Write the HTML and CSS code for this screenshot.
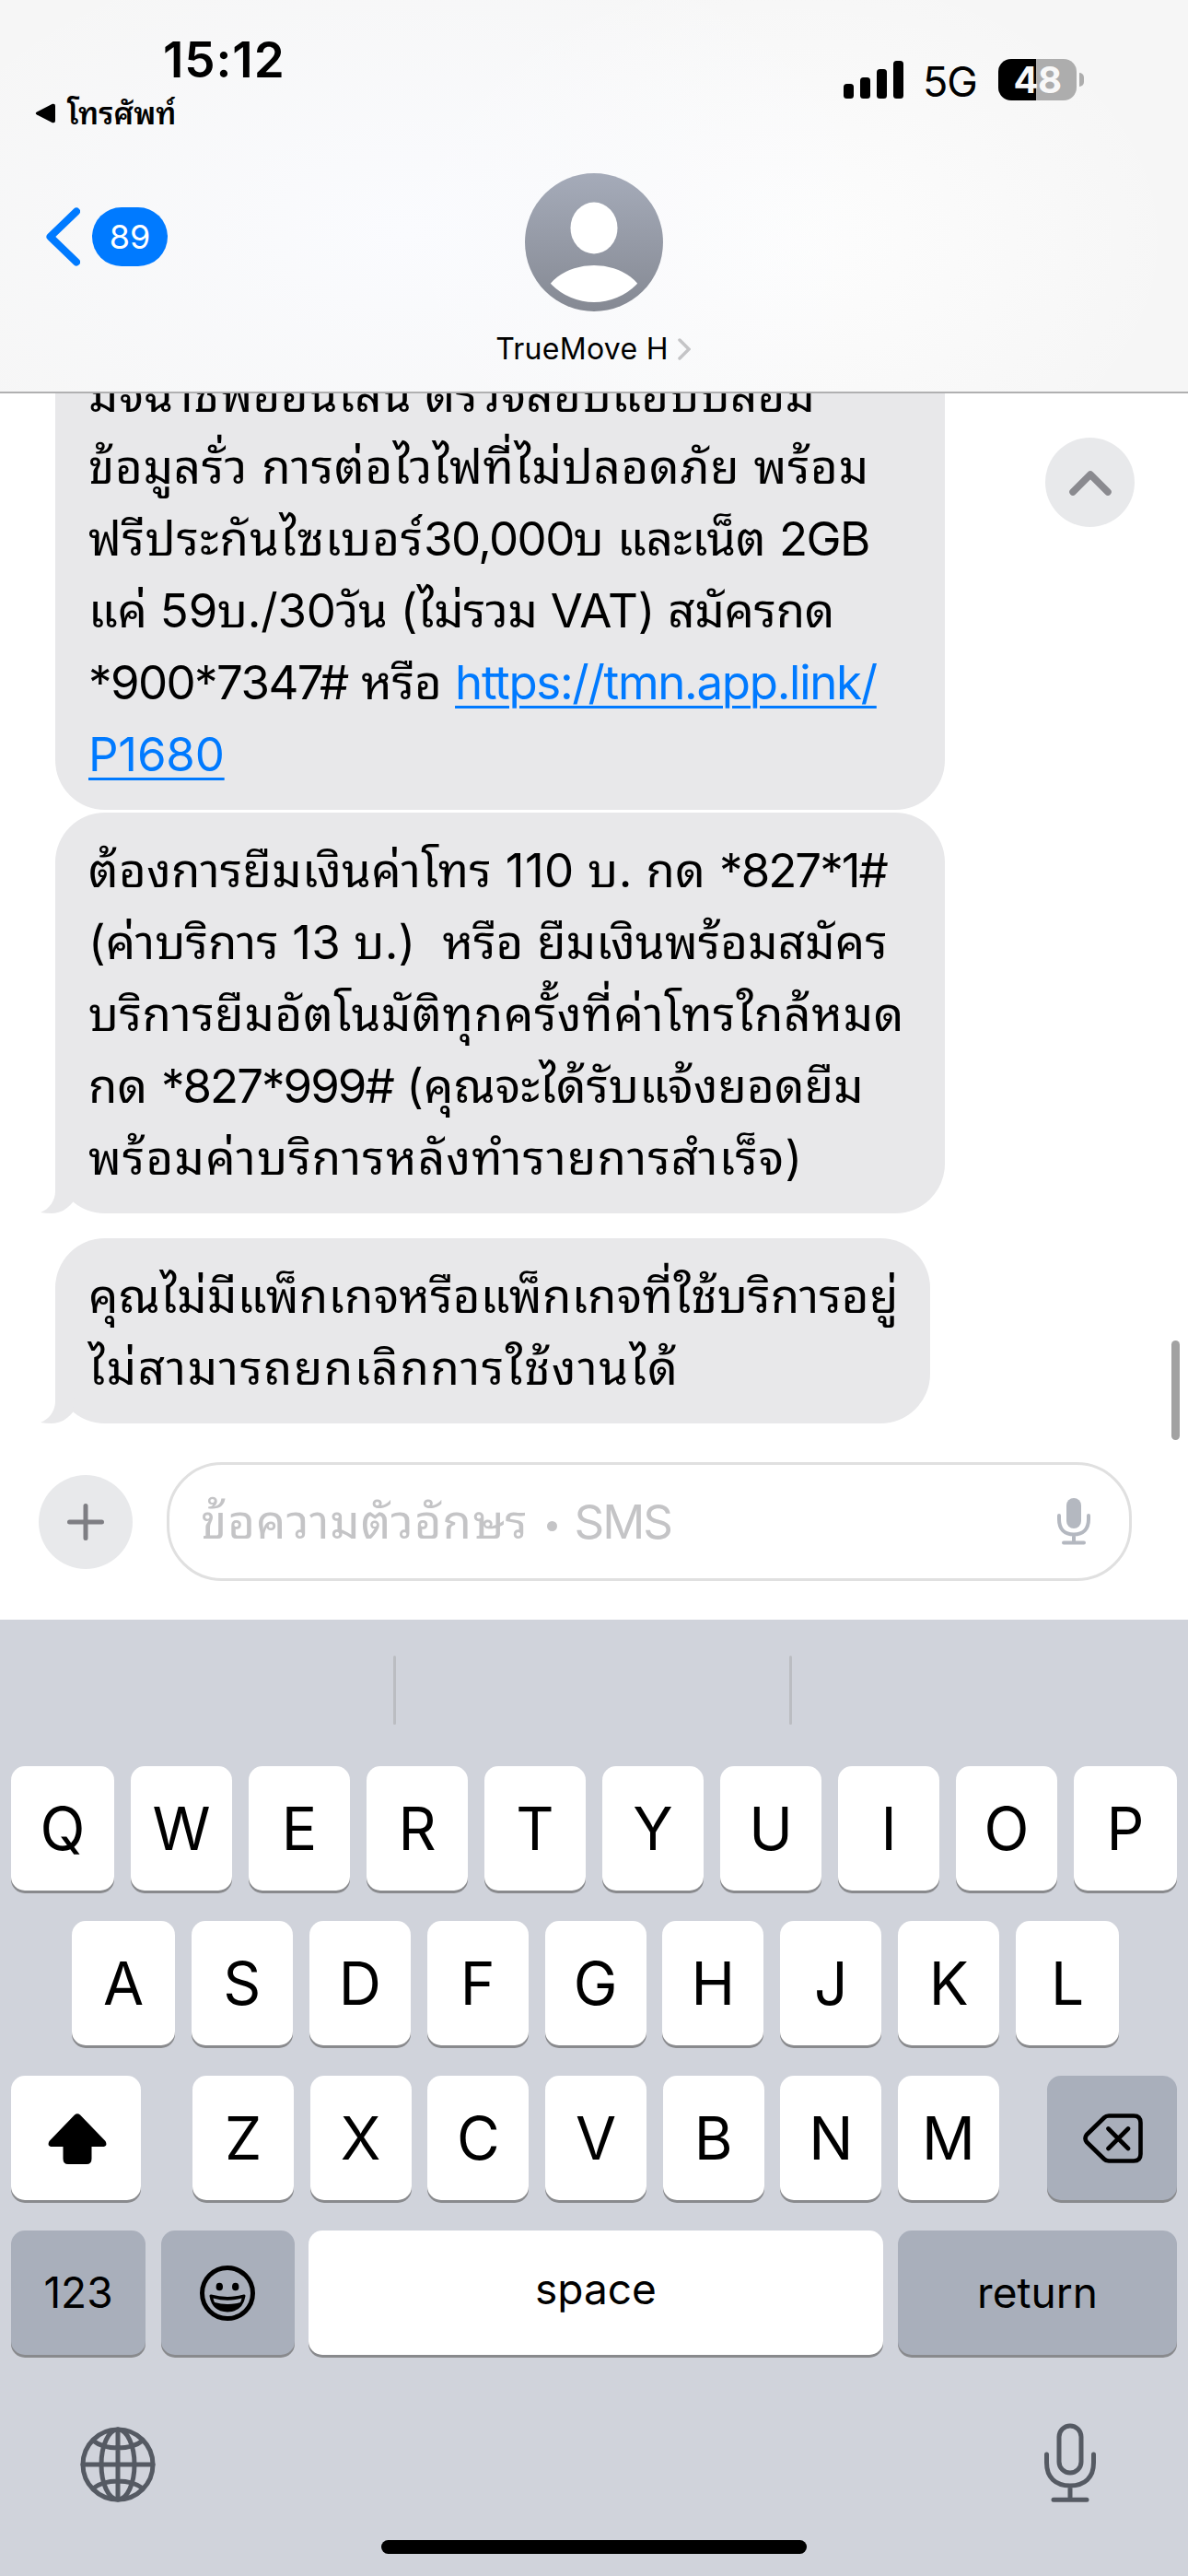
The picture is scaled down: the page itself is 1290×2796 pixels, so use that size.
FILE: index.html
```html
<!DOCTYPE html>
<html lang="th">
<head>
    <meta charset="UTF-8">
    <meta name="viewport" content="width=device-width, initial-scale=1.0">
    <title>TrueMove H</title>
    <link rel="stylesheet" href="styles.css">
</head>
<body>
    <div class="screen">
        <header class="header">
            <div class="status-bar">
                <div class="status-left">
                    <div class="time">15:12</div>
                    <div class="back-app">
                        <svg width="22" height="22" viewBox="0 0 22 22"><path d="M2 9.5 19 .8Q22 0 22 3V19Q22 22 19 21.200L2 12.500Q-.5 11 2 9.500Z"/></svg>
                        <span class="back-app-name">โทรศัพท์</span>
                    </div>
                </div>
                <div class="status-right">
                    <svg width="65" height="41" viewBox="0 0 65 41"><rect y="25" width="11" height="16" rx="3.500"/><rect x="18" y="18" width="11" height="23" rx="3.500"/><rect x="36" y="9" width="11" height="32" rx="3.500"/><rect x="54" width="11" height="41" rx="3.500"/></svg>
                    <span class="network">5G</span>
                    <div class="battery"><span>48</span></div>
                    <div class="battery-cap"></div>
                </div>
            </div>
            <div class="nav">
                <div class="back">
                    <svg width="37" height="64" viewBox="0 0 37 64"><path d="M33 4.500 4.500 32 33 59.500"/></svg>
                    <span class="badge">89</span>
                </div>
                <div class="contact">
                    <svg class="avatar" width="150" height="150" viewBox="0 0 150 150">
                        <defs>
                            <linearGradient id="avatarBg" x1="0" y1="0" x2="0" y2="1">
                                <stop offset="0" stop-color="#a5abb9"/>
                                <stop offset="1" stop-color="#858993"/>
                            </linearGradient>
                            <clipPath id="avatarClip"><circle cx="75" cy="75" r="65"/></clipPath>
                        </defs>
                        <circle cx="75" cy="75" r="75" fill="url(#avatarBg)"/>
                        <ellipse cx="75" cy="59.500" rx="25.500" ry="28" fill="#fff"/>
                        <ellipse cx="75" cy="143" rx="56" ry="43" fill="#fff" clip-path="url(#avatarClip)"/>
                    </svg>
                    <div class="contact-name">
                        <span>TrueMove H</span>
                        <svg width="14" height="24" viewBox="0 0 14 24"><path d="M2 2 12 12 2 22"/></svg>
                    </div>
                </div>
            </div>
        </header>

        <main class="messages">
            <div class="bubble first">
                <p class="ls-03">มิจฉาชีพออนไลน์ ตรวจสอบแอปปลอม</p>
                <p class="ls-08">ข้อมูลรั่ว การต่อไวไฟที่ไม่ปลอดภัย พร้อม</p>
                <p><span class="ls-10">ฟรีประกันไซเบอร์</span><span class="num">30,000</span>บ และเน็ต <span class="num">2GB</span></p>
                <p class="ls-neg">แค่ 59บ./30วัน (ไม่รวม VAT) สมัครกด</p>
                <p><span class="num">*900*7347#</span> หรือ <a class="url" href="#">https://tmn.app.link/</a></p>
                <p class="ls-neg"><a href="#">P1680</a></p>
            </div>
            <div class="bubble tail">
                <p class="ls-04">ต้องการยืมเงินค่าโทร 110 บ. กด <span class="num-tight">*827*1#</span></p>
                <p class="ls-02">(ค่าบริการ 13 บ.)&nbsp; หรือ ยืมเงินพร้อมสมัคร</p>
                <p class="ls-08">บริการยืมอัตโนมัติทุกครั้งที่ค่าโทรใกล้หมด</p>
                <p class="ls-02">กด <span class="num-tight">*827*999#</span> (คุณจะได้รับแจ้งยอดยืม</p>
                <p class="ls-13">พร้อมค่าบริการหลังทำรายการสำเร็จ)</p>
                <svg class="tail-shape" width="40" height="62" viewBox="0 0 40 62"><path d="M16 0V38C16 48 10 57 0 61Q6 62 12 62C22 62 29 57 35 50L40 0Z"/></svg>
            </div>
            <div class="bubble tail last">
                <p class="ls-03">คุณไม่มีแพ็กเกจหรือแพ็กเกจที่ใช้บริการอยู่</p>
                <p class="ls-16">ไม่สามารถยกเลิกการใช้งานได้</p>
                <svg class="tail-shape" width="40" height="62" viewBox="0 0 40 62"><path d="M16 0V38C16 48 10 57 0 61Q6 62 12 62C22 62 29 57 35 50L40 0Z"/></svg>
            </div>
            <button class="scroll-up">
                <svg width="46" height="28" viewBox="0 0 46 28"><path d="M4 24 23 5 42 24"/></svg>
            </button>
            <div class="scrollbar"></div>
        </main>

        <div class="composer">
            <button class="plus">
                <svg width="40" height="40" viewBox="0 0 40 40"><path d="M20 2.500V37.500M2.500 20H37.500"/></svg>
            </button>
            <div class="field">
                <span class="placeholder"><span class="ls-10">ข้อความตัวอักษร</span><i></i><span class="num-tight">SMS</span></span>
                <svg width="36" height="51" viewBox="0 0 36 51"><rect x="10" width="16" height="33" rx="8" fill="#b4b8c0"/><path d="M2 19V23C2 34 8 39.500 18 39.500S34 34 34 23V19M18 40V48M7 48.500H29" fill="none" stroke="#b4b8c0" stroke-width="4" stroke-linecap="round"/></svg>
            </div>
        </div>

        <section class="keyboard">
            <div class="suggestions"><i></i><i></i></div>
            <div class="row">
                <button class="key wide">Q</button><button class="key">W</button><button class="key">E</button><button class="key">R</button><button class="key">T</button><button class="key">Y</button><button class="key">U</button><button class="key">I</button><button class="key">O</button><button class="key wide">P</button>
            </div>
            <div class="row middle">
                <button class="key wide">A</button><button class="key">S</button><button class="key">D</button><button class="key">F</button><button class="key">G</button><button class="key">H</button><button class="key">J</button><button class="key">K</button><button class="key wide">L</button>
            </div>
            <div class="row">
                <button class="key side">
                    <svg width="64" height="56" viewBox="0 0 64 56"><path d="M29 1.500Q32-1 35 1.500L62.500 30Q65.500 36 59 36H47.500V49Q47.500 55 42 55H22Q16.500 55 16.500 49V36H5Q-1.500 36 1.500 30Z"/></svg>
                </button>
                <div class="letters">
                    <button class="key">Z</button><button class="key">X</button><button class="key">C</button><button class="key">V</button><button class="key">B</button><button class="key">N</button><button class="key">M</button>
                </div>
                <button class="key side dark">
                    <svg width="66" height="55" viewBox="0 0 66 55"><path d="M28 2.500H55Q62.500 2.500 62.500 10V44Q62.500 51.500 55 51.500H28Q25 51.500 23 49.500L4 31Q1 27 4 23L23 4.500Q25 2.500 28 2.500ZM27.500 16.500 49 38M49 16.500 27.500 38" fill="none" stroke="#000" stroke-width="4.600" stroke-linecap="round" stroke-linejoin="round"/></svg>
                </button>
            </div>
            <div class="row bottom">
                <button class="key dark">123</button>
                <button class="key emoji dark">
                    <svg width="62" height="62" viewBox="0 0 62 62"><circle cx="31" cy="31" r="27.500" fill="none" stroke="#000" stroke-width="5"/><ellipse cx="22.300" cy="24" rx="3.700" ry="4.300"/><ellipse cx="39.700" cy="24" rx="3.700" ry="4.300"/><path d="M13 34Q31 39 49 34Q46.500 49.500 31 50Q15.500 49.500 13 34Z" stroke="#000" stroke-width="3" stroke-linejoin="round"/><path d="M15.500 36.500Q31 41 46.500 36.500Q46 39 45 41Q31 45 17 41Q16 39 15.500 36.500Z" fill="#a9afbb"/></svg>
                </button>
                <button class="key space">space</button>
                <button class="key return dark">return</button>
            </div>
            <div class="dock">
                <svg width="82" height="82" viewBox="0 0 82 82"><circle cx="41" cy="41" r="38"/><ellipse cx="41" cy="41" rx="18" ry="38"/><path d="M41 3V79M3 41H79M14 15Q24 23 41 23T68 15M14 67Q24 59 41 59T68 67"/></svg>
                <svg width="58" height="86" viewBox="0 0 58 86"><rect x="17" y="3" width="24" height="51" rx="12"/><path d="M3.500 34V43C3.500 59 13 68 29 68S54.500 59 54.500 43V34M29 68V83M11 83.300H47"/></svg>
            </div>
            <div class="home-bar"></div>
        </section>
    </div>
</body>
</html>
```
FILE: styles.css
```css
* {
    box-sizing: border-box;
}

body {
    margin: 0;
    background: #fff;
    color: #000;
    font-family: Inter, "Noto Sans Thai Looped", Loma, Waree, "Noto Sans Thai", sans-serif;
}

button {
    border: none;
    padding: 0;
    font-family: inherit;
    color: inherit;
}

svg {
    display: block;
    flex: none;
}

p {
    margin: 0;
}

.screen {
    width: 1290px;
    height: 2796px;
    display: flex;
    flex-direction: column;
    overflow: hidden;
}

/* header */
.header {
    height: 427px;
    flex: none;
    background: radial-gradient(ellipse 560px 330px at 440px 250px, #fafbfe, rgba(250, 251, 254, 0)), radial-gradient(ellipse 420px 300px at 860px 260px, #fdfdfd, rgba(253, 253, 253, 0)), #f6f6f6;
    border-bottom: 2px solid #b0b0b1;
}

.status-bar {
    height: 188px;
    display: flex;
    justify-content: space-between;
    padding: 0 113px 0 38px;
}

.time {
    margin: 34px 0 0 139px;
    font-size: 53px;
    line-height: 62px;
    font-weight: 600;
    letter-spacing: 0.9px;
}

.back-app {
    display: flex;
    align-items: center;
    gap: 13px;
    height: 54px;
}

.back-app-name {
    font-size: 33px;
    line-height: 54px;
    font-weight: 600;
}

.status-right {
    display: flex;
    align-items: center;
    height: 45px;
    margin-top: 64px;
}

.network {
    margin: 4px 0 0 21px;
    width: 59px;
    font-size: 45px;
    line-height: 45px;
    letter-spacing: -1px;
}

.battery {
    margin-left: 23px;
    width: 85px;
    height: 45px;
    border-radius: 14px;
    background: linear-gradient(90deg, #000 41px, #adadad 41px);
    color: #f8f8f8;
    font-size: 40px;
    line-height: 46px;
    font-weight: 700;
    text-align: center;
    letter-spacing: -0.5px;
}

.battery-cap {
    width: 5px;
    height: 15px;
    margin-left: 3px;
    border-radius: 0 5px 5px 0;
    background: #adadad;
}

.nav {
    display: grid;
    grid-template-columns: 1fr 300px 1fr;
}

.back {
    display: flex;
    gap: 13px;
    padding: 37px 0 0 50px;
}

.back path {
    fill: none;
    stroke: #007aff;
    stroke-width: 8;
    stroke-linecap: round;
    stroke-linejoin: round;
}

.badge {
    width: 82px;
    height: 64px;
    border-radius: 32px;
    background: #007aff;
    color: #fff;
    font-size: 36px;
    line-height: 64px;
    text-align: center;
}

.contact {
    display: flex;
    flex-direction: column;
    align-items: center;
}

.contact-name {
    display: flex;
    align-items: center;
    gap: 10px;
    margin: 20px 0 0 -2px;
    font-size: 32px;
    line-height: 42px;
    letter-spacing: 0.3px;
    white-space: nowrap;
}

.contact-name path {
    fill: none;
    stroke: #c4c4c6;
    stroke-width: 3.5;
    stroke-linecap: round;
}

/* messages */
.messages {
    position: relative;
    flex: 1;
    min-height: 0;
    display: flex;
    flex-direction: column;
    justify-content: flex-end;
    align-items: flex-start;
    padding: 0 0 24px 60px;
    overflow: hidden;
}

.bubble {
    position: relative;
    flex: none;
    width: 966px;
    margin-bottom: 3px;
    padding: 24px 0 21px 36px;
    border-radius: 54px;
    background: #e8e8ea;
    font-size: 51px;
    line-height: 78px;
    white-space: nowrap;
}

.bubble p {
    height: 78px;
}

.bubble.tail {
    margin-bottom: 27px;
}

.bubble.last {
    width: 950px;
    margin-bottom: 0;
}

.bubble a {
    color: #007aff;
    text-decoration-thickness: 3px;
    text-underline-offset: 7px;
}

/* letter spacing */
.ls-neg { letter-spacing: -0.2px; }
.ls-02 { letter-spacing: 0.2px; }
.ls-03 { letter-spacing: 0.3px; }
.ls-04 { letter-spacing: 0.4px; }
.ls-08 { letter-spacing: 0.8px; }
.ls-10 { letter-spacing: 1px; }
.ls-13 { letter-spacing: 1.3px; }
.ls-16 { letter-spacing: 1.6px; }
.num { letter-spacing: -1.6px; }
.num-tight { letter-spacing: -2px; }
.url { letter-spacing: -1.3px; }

.tail-shape {
    position: absolute;
    left: -16px;
    bottom: 0;
    fill: #e8e8ea;
}

.scroll-up {
    position: absolute;
    top: 48px;
    right: 58px;
    width: 97px;
    height: 97px;
    display: flex;
    justify-content: center;
    align-items: center;
    border-radius: 50%;
    background: #e8e9eb;
}

.scroll-up path {
    fill: none;
    stroke: #8a8a8f;
    stroke-width: 7.5;
    stroke-linecap: round;
    stroke-linejoin: round;
}

.scrollbar {
    position: absolute;
    right: 9px;
    bottom: 6px;
    width: 9px;
    height: 108px;
    border-radius: 5px;
    background: #a2a2a2;
}

/* composer */
.composer {
    height: 189px;
    flex: none;
    display: flex;
    padding: 18px 61px 0 42px;
    gap: 37px;
}

.plus {
    width: 102px;
    height: 102px;
    margin-top: 14px;
    display: flex;
    justify-content: center;
    align-items: center;
    border-radius: 50%;
    background: #e8e9eb;
}

.plus path {
    stroke: #7e7e83;
    stroke-width: 5;
    stroke-linecap: round;
}

.field {
    flex: 1;
    height: 129px;
    display: flex;
    justify-content: space-between;
    align-items: center;
    padding: 0 42px 0 34px;
    border: 3px solid #e0e0e0;
    border-radius: 60px;
}

.placeholder {
    display: flex;
    align-items: center;
    font-size: 51px;
    line-height: 78px;
    color: #c4c4c6;
    white-space: nowrap;
}

.placeholder i {
    width: 11px;
    height: 11px;
    margin: 10px 19px 0 20px;
    border-radius: 50%;
    background: #c4c4c6;
}

/* keyboard */
.keyboard {
    height: 1038px;
    flex: none;
    background: #d0d3db;
}

.suggestions {
    height: 159px;
    display: flex;
    justify-content: space-evenly;
    padding: 39px 3px 0 0;
}

.suggestions i {
    width: 3px;
    height: 75px;
    border-radius: 2px;
    background: #bbbdc2;
}

.row {
    display: flex;
    justify-content: space-between;
    margin: 0 12px 33px;
}

.row.middle {
    margin: 0 75px 33px 78px;
}

.letters {
    width: 876px;
    display: flex;
    justify-content: space-between;
    margin-left: 4px;
}

.key {
    width: 110px;
    height: 135px;
    display: flex;
    justify-content: center;
    align-items: center;
    border-radius: 15px;
    background: #fff;
    box-shadow: 0 3px 0 #898a8d;
    font-size: 64px;
}

.key.wide {
    width: 112px;
}

.key.side {
    width: 141px;
    padding: 2px 0 0 2px;
}

.key.dark {
    background: #a9afbb;
}

.row.bottom {
    display: grid;
    grid-template-columns: 146px 145px 624px 303px;
    margin-bottom: 0;
}

.row.bottom .key {
    width: auto;
    padding-bottom: 2px;
    font-size: 46px;
}

.row.bottom .emoji {
    margin: 0 -1px 0 1px;
    padding: 0 2px 0 0;
}

.row.bottom .space {
    padding-bottom: 9px;
}

.dock {
    display: flex;
    justify-content: space-between;
    align-items: center;
    height: 86px;
    margin: 74px 99px 0 87px;
}

.dock svg {
    fill: none;
    stroke: #555a63;
    stroke-width: 5;
    stroke-linecap: round;
}

.dock svg:first-child {
    margin-top: 3px;
}

.home-bar {
    width: 462px;
    height: 15px;
    margin: 41px auto 0;
    border-radius: 8px;
    background: #000;
}
```
